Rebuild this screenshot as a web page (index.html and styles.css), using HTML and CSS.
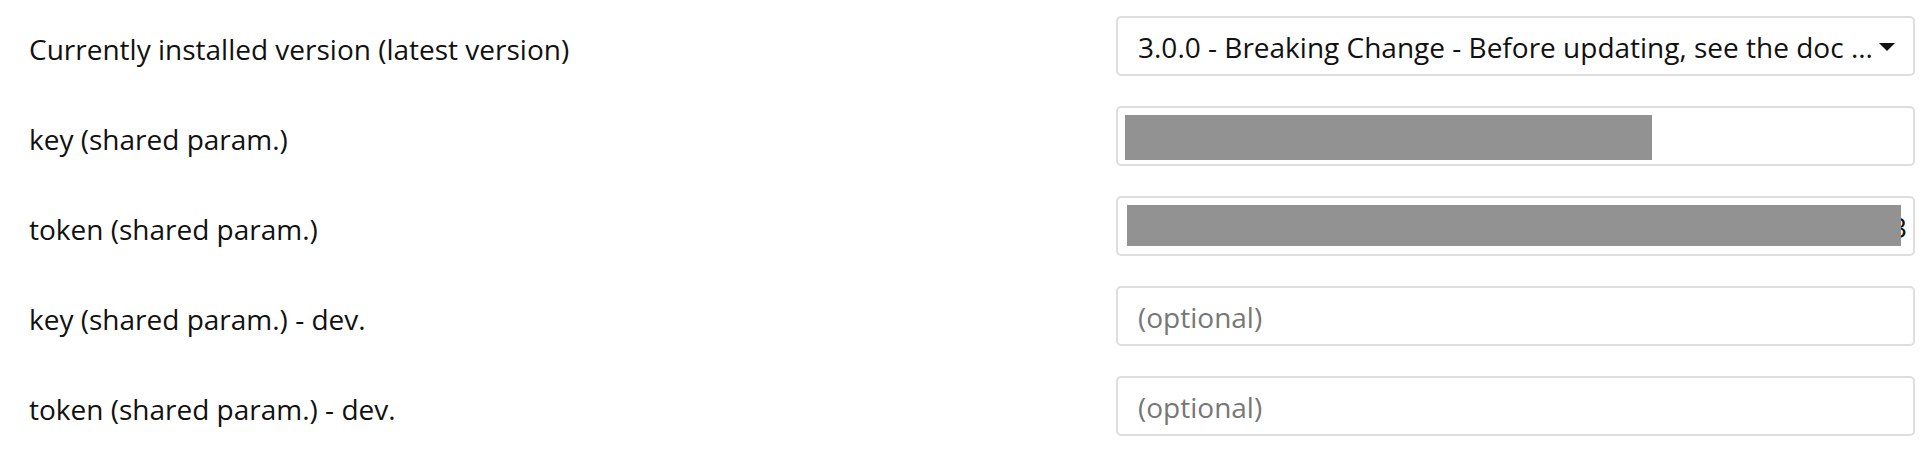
FILE: index.html
```html
<!DOCTYPE html>
<html>
<head>
<meta charset="utf-8">
<link rel="stylesheet" href="styles.css">
</head>
<body>
<div class="form">
  <div class="row">
    <div class="label">Currently installed version (latest version)</div>
    <div class="field select">
      <span class="value">3.0.0 - Breaking Change - Before updating, see the doc ...</span>
      <span class="caret"></span>
    </div>
  </div>
  <div class="row">
    <div class="label">key (shared param.)</div>
    <div class="field">
      <span class="redact redact-key"></span>
    </div>
  </div>
  <div class="row">
    <div class="label">token (shared param.)</div>
    <div class="field field-end">
      <span class="value">3</span>
      <span class="redact redact-token"></span>
    </div>
  </div>
  <div class="row">
    <div class="label">key (shared param.) - dev.</div>
    <div class="field"><span class="placeholder">(optional)</span></div>
  </div>
  <div class="row">
    <div class="label">token (shared param.) - dev.</div>
    <div class="field"><span class="placeholder">(optional)</span></div>
  </div>
</div>
</body>
</html>
```
FILE: styles.css
```css
* { box-sizing: border-box; }
html, body { margin: 0; padding: 0; background: #fff; }
body {
  font-family: "Open Sans", "Noto Sans", sans-serif;
  color: #111;
  width: 1930px;
  height: 454px;
  overflow: hidden;
}
.form {
  display: flex;
  flex-direction: column;
  gap: 30px;
  padding: 16px 15px 0 29px;
}
.row {
  display: grid;
  grid-template-columns: 1087px 799px;
  align-items: center;
  height: 60px;
}
.label {
  font-size: 28px;
  padding-top: 6px;
}
.field {
  position: relative;
  height: 60px;
  border: 2px solid #dedede;
  border-radius: 5px;
  display: flex;
  align-items: center;
  padding: 2px 20px 0;
  font-size: 28px;
  overflow: hidden;
}
.select { justify-content: space-between; padding-right: 18px; }
.value { white-space: nowrap; }
.caret {
  width: 0; height: 0;
  border-left: 8px solid transparent;
  border-right: 8px solid transparent;
  border-top: 8px solid #111;
}
.placeholder { color: #777; }
.field-end { justify-content: flex-end; padding-right: 6px; }
.redact {
  position: absolute;
  background: #929292;
}
.redact-key { left: 7px; top: 7px; width: 527px; height: 45px; }
.redact-token { left: 9px; top: 7px; width: 774px; height: 41px; }
```
